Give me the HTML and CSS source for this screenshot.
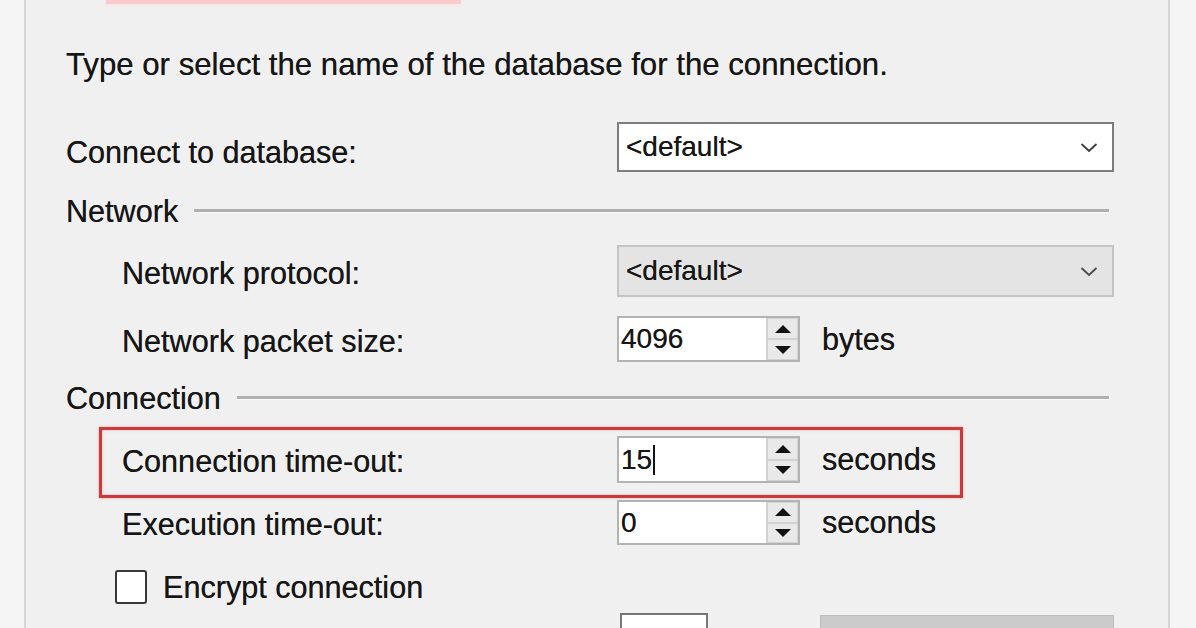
FILE: index.html
```html
<!DOCTYPE html>
<html lang="en">
<head>
    <meta charset="UTF-8">
    <meta name="viewport" content="width=device-width, initial-scale=1.0">
    <title>Connection Properties</title>
    <link rel="stylesheet" href="styles.css">
</head>
<body>
    <div class="panel">
        <div class="flag"></div>
        <p class="intro">Type or select the name of the database for the connection.</p>

        <div class="row row-connect">
            <label class="label">Connect to database:</label>
            <div class="combo">
                <span>&lt;default&gt;</span>
                <svg class="chevron" width="18" height="11" viewBox="0 0 18 11"><polyline points="1.5,2 9,9 16.5,2" fill="none" stroke="#3a3a3a" stroke-width="1.8"/></svg>
            </div>
        </div>

        <div class="group group-network">
            <span>Network</span>
            <div class="rule"></div>
        </div>

        <div class="row row-protocol">
            <label class="label indent">Network protocol:</label>
            <div class="combo disabled">
                <span>&lt;default&gt;</span>
                <svg class="chevron" width="18" height="11" viewBox="0 0 18 11"><polyline points="1.5,2 9,9 16.5,2" fill="none" stroke="#4a4a4a" stroke-width="1.8"/></svg>
            </div>
        </div>

        <div class="row row-packet">
            <label class="label indent">Network packet size:</label>
            <div class="spin">
                <span class="value">4096</span>
                <div class="arrows">
                    <div class="arrow up"></div>
                    <div class="arrow down"></div>
                </div>
            </div>
            <span class="unit">bytes</span>
        </div>

        <div class="group group-connection">
            <span>Connection</span>
            <div class="rule"></div>
        </div>

        <div class="row row-timeout highlight">
            <label class="label">Connection time-out:</label>
            <div class="spin">
                <span class="value">15<span class="caret"></span></span>
                <div class="arrows">
                    <div class="arrow up"></div>
                    <div class="arrow down"></div>
                </div>
            </div>
            <span class="unit">seconds</span>
        </div>

        <div class="row row-exec">
            <label class="label indent">Execution time-out:</label>
            <div class="spin">
                <span class="value">0</span>
                <div class="arrows">
                    <div class="arrow up"></div>
                    <div class="arrow down"></div>
                </div>
            </div>
            <span class="unit">seconds</span>
        </div>

        <div class="row row-encrypt">
            <div class="checkbox"></div>
            <span>Encrypt connection</span>
        </div>

        <div class="row row-bottom">
            <div class="small-box"></div>
            <div class="gray-button"></div>
        </div>
    </div>
</body>
</html>
```

FILE: styles.css
```css
body {
    margin: 0;
    background-color: #f5f5f5;
    font-family: "Liberation Sans", Arial, sans-serif;
    color: #161616;
    overflow: hidden;
}

.panel {
    margin-left: 24px;
    width: 1146px;
    height: 628px;
    box-sizing: border-box;
    border-left: 2px solid #d6d6d6;
    border-right: 2px solid #d6d6d6;
    background-color: #f0f0f0;
    padding: 0 53px 0 40px;
    font-size: 30.6px;
    text-shadow: 0 0 0.6px #444;
}

.flag {
    margin-left: 40px;
    width: 355px;
    height: 4px;
    background-color: #f9caca;
    box-shadow: 0 2px 4px #fbe3e3;
}

.intro {
    margin: 36px 0 0 0;
    height: 50px;
    line-height: 50px;
    font-size: 31.2px;
}

.row {
    display: flex;
    align-items: center;
}

.label {
    width: 551px;
    flex-shrink: 0;
    box-sizing: border-box;
    padding-top: 4px;
}

.label.indent {
    padding-left: 56px;
}

.row-connect {
    margin-top: 32px;
    height: 50px;
}

.row-connect .label {
    padding-top: 10px;
}

.combo {
    width: 497px;
    height: 100%;
    box-sizing: border-box;
    border: 2px solid #7d7d7d;
    background-color: #fff;
    display: flex;
    align-items: center;
    justify-content: space-between;
    padding: 0 14px 0 7px;
    font-size: 28px;
}

.combo.disabled {
    background-color: #e4e4e4;
    border-color: #c4c4c4;
}

.group {
    display: flex;
    align-items: center;
    height: 40px;
}

.group .rule {
    flex: 1;
    height: 3px;
    background-color: #b0b0b0;
    border-bottom: 1px solid #fafafa;
    margin: 0 6px 0 16px;
}

.group-network {
    margin-top: 19px;
}

.group-connection {
    margin-top: 16px;
}

.row-protocol {
    margin-top: 14px;
    height: 52px;
}

.row-packet {
    margin-top: 19px;
    height: 46px;
}

.spin {
    width: 183px;
    height: 100%;
    box-sizing: border-box;
    border: 2px solid #b3b3b3;
    background-color: #fff;
    display: flex;
    font-size: 28px;
}

.spin .value {
    flex: 1;
    display: flex;
    align-items: center;
    padding-left: 2px;
}

.caret {
    display: inline-block;
    width: 2px;
    height: 30px;
    background-color: #111;
    margin-left: 1px;
}

.arrows {
    width: 31px;
    display: flex;
    flex-direction: column;
    background-color: #e9e9e9;
    border-left: 1px solid #cfcfcf;
}

.arrow {
    flex: 1;
    display: flex;
    align-items: center;
    justify-content: center;
    border: 1px solid #d2d2d2;
}

.arrow::after {
    content: "";
    border-left: 8px solid transparent;
    border-right: 8px solid transparent;
}

.arrow.up::after {
    border-bottom: 8px solid #111;
}

.arrow.down::after {
    border-top: 8px solid #111;
}

.unit {
    margin-left: 22px;
}

.highlight {
    margin-left: 33px;
    width: 864px;
    box-sizing: border-box;
    border: 3px solid #c83a3c;
    box-shadow: 0 0 3px #f1b3b3, inset 0 0 3px #f1b3b3;
}

.row-timeout {
    margin-top: 9px;
    height: 71px;
    padding: 6px 0 12px 0;
}

.highlight .label {
    width: 515px;
    padding-left: 20px;
}

.row-exec {
    margin-top: 2px;
    height: 45px;
}

.row-encrypt {
    margin-top: 25px;
    height: 34px;
    padding-left: 49px;
}

.checkbox {
    width: 32px;
    height: 34px;
    box-sizing: border-box;
    border: 2px solid #383838;
    border-radius: 3px;
    background-color: #fff;
    margin-right: 16px;
}

.row-bottom {
    margin-top: 9px;
    height: 40px;
    align-items: flex-start;
}

.small-box {
    margin-left: 554px;
    width: 88px;
    height: 40px;
    box-sizing: border-box;
    border: 2px solid #777;
    background-color: #fff;
}

.gray-button {
    margin-left: 112px;
    margin-top: 2px;
    width: 292px;
    height: 40px;
    background-color: #cbcbcb;
    border: 1px solid #bdbdbd;
}
```
